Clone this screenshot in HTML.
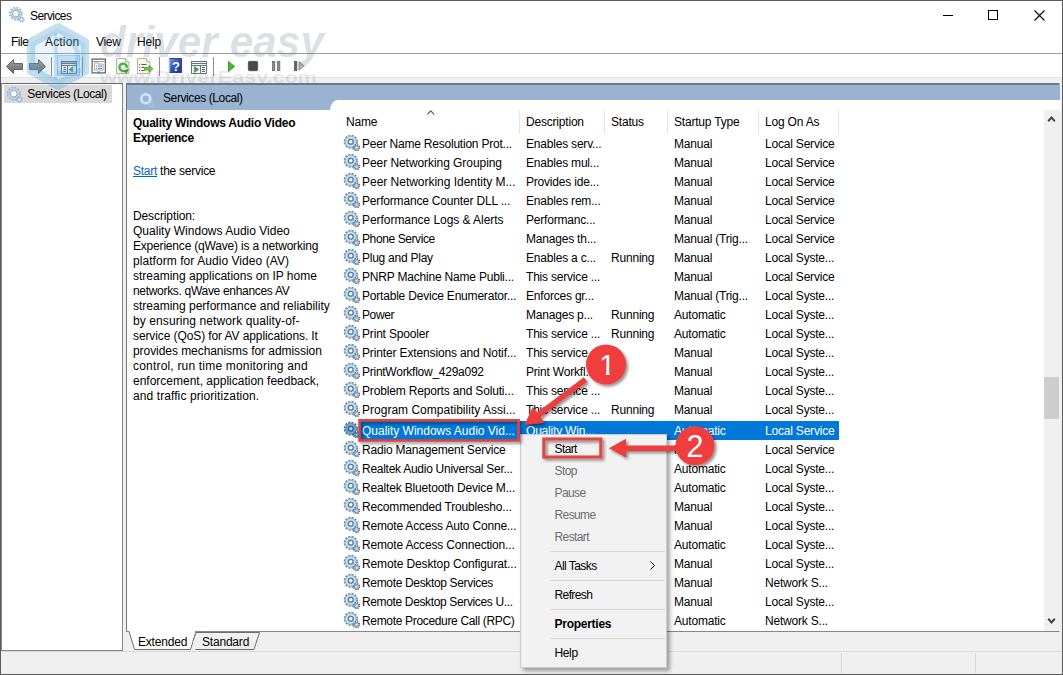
<!DOCTYPE html>
<html lang="en"><head><meta charset="utf-8"><title>Services</title>
<style>
*{box-sizing:border-box;margin:0;padding:0}
html,body{width:1063px;height:675px;overflow:hidden;background:#fff}
body{font-family:"Liberation Sans",sans-serif;font-size:12px;color:#000;position:relative}
.abs{position:absolute}
#win{position:absolute;left:0;top:0;width:1063px;height:675px;background:#fff;border:1px solid #5a5a5a;overflow:hidden}
.t{position:absolute;white-space:nowrap;line-height:14px;height:14px;letter-spacing:-.2px}
.g{position:absolute}
.row .t{top:2px}
.row{position:absolute;left:341px;width:498px;height:19px}
.sel{background:#0078d7;color:#fff}
</style></head><body>
<svg width="0" height="0" style="position:absolute"><defs>
<g id="gear">
<circle cx="7.800" cy="7.800" r="6.300" fill="none" stroke="#6f8da7" stroke-width="1.700" stroke-dasharray="2.050 1.2487"/>
<circle cx="7.800" cy="7.800" r="5.600" fill="url(#gg)" stroke="#86a5be" stroke-width=".7"/>
<circle cx="7.800" cy="7.800" r="2.400" fill="#fff" stroke="#5b7a94" stroke-width="1.300"/>
<circle cx="13.600" cy="13.700" r="2.900" fill="none" stroke="#566e84" stroke-width="1.600" stroke-dasharray="1.250 1.028"/>
<circle cx="13.600" cy="13.700" r="2.400" fill="#a3bacb" stroke="#6a859d" stroke-width=".6"/>
<circle cx="13.600" cy="13.700" r=".9" fill="#e4edf3"/>
</g>
<g id="gearL">
<circle cx="7.800" cy="7.700" r="6.100" fill="none" stroke="#8aa5ba" stroke-width="1.500" stroke-dasharray="1.700 1.494"/>
<circle cx="7.800" cy="7.700" r="4.600" fill="#fff" stroke="#b4d3ea" stroke-width="2"/>
<circle cx="7.800" cy="7.700" r="3.300" fill="none" stroke="#6f8fa9" stroke-width=".8"/>
<circle cx="13.400" cy="13.400" r="2.500" fill="none" stroke="#8da6bb" stroke-width="1.300" stroke-dasharray="1.050 .913"/>
<circle cx="13.400" cy="13.400" r="1.700" fill="#e6eef5" stroke="#9ab4c9" stroke-width=".7"/>
</g>
<g id="gearH">
<circle cx="7.800" cy="7.700" r="5.900" fill="none" stroke="#b9d2e6" stroke-width="1.300" stroke-dasharray="1.600 1.489"/>
<circle cx="7.800" cy="7.700" r="4.300" fill="none" stroke="#d6e8f5" stroke-width="2.200"/>
<circle cx="13.200" cy="13.200" r="2.300" fill="none" stroke="#bcd3e6" stroke-width="1.100" stroke-dasharray="1 .806"/>
</g>
<g id="gearS">
<circle cx="7.800" cy="7.700" r="6.300" fill="none" stroke="#3d6f9f" stroke-width="1.600" stroke-dasharray="2.050 1.2487"/>
<circle cx="7.800" cy="7.700" r="5.600" fill="#6ea3d2" stroke="#4a80b3" stroke-width=".7"/>
<circle cx="7.800" cy="7.700" r="2.400" fill="#b9d3ea" stroke="#2c5c8c" stroke-width="1.300"/>
<circle cx="13.600" cy="13.700" r="2.900" fill="none" stroke="#2d5986" stroke-width="1.600" stroke-dasharray="1.250 1.028"/>
<circle cx="13.600" cy="13.700" r="2.400" fill="#5a8fc0" stroke="#37699a" stroke-width=".6"/>
<circle cx="13.600" cy="13.700" r=".9" fill="#a9c8e3"/>
</g>
<radialGradient id="gg" cx=".5" cy=".5" r=".5"><stop offset=".45" stop-color="#9fc3dc"/><stop offset=".75" stop-color="#cfe6f5"/><stop offset="1" stop-color="#a5c6dc"/></radialGradient>
</defs></svg>
<div id="win">

<div class="abs" id="in" style="left:-1px;top:-1px;width:1063px;height:675px">
<svg class="g" style="left:8px;top:6px" width="17" height="17" viewBox="0 0 17 17"><use href="#gearL"/></svg>
<div class="t" style="left:30px;top:9px;letter-spacing:-0.59px">Services</div>
<div class="abs" style="left:943px;top:15px;width:10px;height:1px;background:#000"></div>
<div class="abs" style="left:988px;top:10px;width:10px;height:10px;border:1px solid #000"></div>
<svg class="g" style="left:1034px;top:10px" width="11" height="11" viewBox="0 0 11 11"><path d="M.5 .5l10 10M10.500 .5l-10 10" stroke="#000" stroke-width="1.100" fill="none"/></svg>
<div class="t" style="left:11px;top:35px;letter-spacing:-0.48px">File</div>
<div class="t" style="left:45px;top:35px;letter-spacing:0.17px">Action</div>
<div class="t" style="left:96px;top:35px;letter-spacing:-0.33px">View</div>
<div class="t" style="left:137px;top:35px;letter-spacing:-0.20px">Help</div>
<div class="abs" style="left:1px;top:53px;width:1061px;height:1px;background:#a0a0a0"></div>
<svg class="g" style="left:0;top:54px" width="320" height="24" viewBox="0 54 320 24">
<defs>
<linearGradient id="ag" x1="0" y1="0" x2="0" y2="1"><stop offset="0" stop-color="#a9a9a9"/><stop offset=".5" stop-color="#858585"/><stop offset="1" stop-color="#6c6c6c"/></linearGradient>
<linearGradient id="hg" x1="0" y1="0" x2="1" y2="1"><stop offset="0" stop-color="#7d97e0"/><stop offset=".5" stop-color="#2f50b5"/><stop offset="1" stop-color="#1d348c"/></linearGradient>
<linearGradient id="pg" x1="0" y1="0" x2="1" y2="1"><stop offset="0" stop-color="#fff"/><stop offset="1" stop-color="#e4e4dc"/></linearGradient>
</defs>
<path d="M6.500 66.500L13.500 59.500V63.500H22.500V69.500H13.500V73.500Z" fill="url(#ag)" stroke="#666" stroke-width="1" stroke-linejoin="round"/>
<path d="M45.500 66.500L38.500 59.500V63.500H29.500V69.500H38.500V73.500Z" fill="url(#ag)" stroke="#586464" stroke-width="1" stroke-linejoin="round"/>
<path d="M51.500 57v19M82.500 57v19M159.500 57v19M213.500 57v19" stroke="#8d8d8d" stroke-width="1"/>
<rect x="57.500" y="55.500" width="22" height="20" fill="#cce8ff" stroke="#99d1ff"/>
<!-- show/hide tree -->
<rect x="61.500" y="61.500" width="15" height="12" fill="#f4f7f9" stroke="#6a7480"/>
<path d="M62 63.300h14" stroke="#6a7480" stroke-width="1.600"/><path d="M61.500 65.500h15M67.500 65.500v8" stroke="#6a7480"/>
<path d="M63.500 67.500h2.500M63.500 69.500h2.500M63.500 71.500h2.500" stroke="#5c6670"/>
<path d="M72.700 67v5l-3.600-2.500z" fill="#3fa53a" stroke="#2e8a2c" stroke-width=".5"/>
<!-- properties -->
<rect x="92.100" y="59.100" width="13.300" height="13.800" fill="#fbfbfb" stroke="#6a6a6a" stroke-width="1.300"/>
<path d="M93 61.500h12" stroke="#8a8a8a" stroke-width=".8"/>
<path d="M94.500 62.800h3.500v1.200h5.200v6h-8.700z" fill="#f3f6f9" stroke="#94a0ac" stroke-width=".8"/>
<path d="M96 66h1M98 66h4M96 68.300h1M98 68.300h4" stroke="#6b7683" stroke-width=".9"/>
<rect x="97" y="71.600" width="3.200" height="1.900" fill="#3c97dc"/>
<!-- refresh -->
<path d="M116.500 58.500h9l3.500 3.500v11.500h-12.500z" fill="url(#pg)" stroke="#a9a9a0" stroke-width=".9"/>
<path d="M125.500 58.500v3.500h3.500" fill="#ecece6" stroke="#a9a9a0" stroke-width=".8"/>
<g transform="rotate(28 123.200 67)"><path d="M125.500 70.300a3.700 3.700 0 1 1 1.300-4.300" fill="none" stroke="#4aae38" stroke-width="2.400"/>
<path d="M129.200 65.700v5.300h-5.300z" fill="#3c9a2e"/></g>
<!-- export list -->
<path d="M137.500 58.500h9l3.500 3.500v11.500h-12.500z" fill="#f7f6e8" stroke="#a9a9a0" stroke-width=".9"/>
<path d="M146.500 58.500v3.500h3.500" fill="#ecece6" stroke="#a9a9a0" stroke-width=".8"/>
<path d="M139 64.500h1M141.500 64.500h5M139 67.500h1M141.500 67.500h3M139 70.500h1M141.500 70.500h3" stroke="#5a5a50" stroke-width="1.100"/>
<path d="M144.500 67.500h4.500v-2.300l4 3.600-4 3.600V70h-4.500z" fill="#6cc84a" stroke="#3d9a2e" stroke-width=".7"/>
<!-- help -->
<rect x="169.500" y="58.500" width="12" height="14" fill="url(#hg)" stroke="#23388a" stroke-width=".9"/>
<path d="M169.500 58.500v14" stroke="#9db2ea" stroke-width="1.400"/>
<text x="176" y="70.500" font-family="Liberation Sans,sans-serif" font-weight="bold" font-size="13" fill="#fff" text-anchor="middle">?</text>
<!-- action pane -->
<rect x="191.500" y="61.500" width="15" height="12" fill="#f4f7f9" stroke="#6a7480"/>
<path d="M192 63.500h14" stroke="#6a7480"/><path d="M191.500 65.500h15M200.500 65.500v8" stroke="#6a7480"/>
<path d="M202 67.500h3M202 69.500h3M202 71.500h3" stroke="#5c6670"/>
<path d="M194.500 66.500v6l4-3z" fill="#3fa53a" stroke="#2e8a2c" stroke-width=".6"/>
<!-- play/stop/pause/resume -->
<path d="M228.500 61.500v10l6-5z" fill="#46b82f" stroke="#2f9a20" stroke-width=".9" stroke-linejoin="round"/>
<rect x="248.300" y="61.300" width="9.400" height="9.400" rx="1.300" fill="#494949" stroke="#3a3a3a" stroke-width=".6"/>
<rect x="272.300" y="61.300" width="2.600" height="9.400" fill="#8a8a8a" stroke="#606060" stroke-width=".6"/>
<rect x="277.300" y="61.300" width="2.600" height="9.400" fill="#8a8a8a" stroke="#606060" stroke-width=".6"/>
<rect x="294.300" y="61.300" width="2.600" height="9.400" fill="#666" stroke="#4c4c4c" stroke-width=".6"/>
<path d="M299 61.800v8.400l5.300-4.200z" fill="#b9b9b9" stroke="#7a7a7a" stroke-width=".8" stroke-linejoin="round"/>
</svg>
<div class="abs" style="left:1px;top:77px;width:1061px;height:5px;background:#f0f0f0;border-top:1px solid #e3e3e3"></div>
<div class="abs" style="left:1px;top:82px;width:1061px;height:592px;background:#f0f0f0"></div>
<div class="abs" style="left:1px;top:83px;width:122px;height:568px;background:#fff;border:1px solid #828790;border-top-color:#696969"></div>
<div class="abs" style="left:4px;top:85px;width:108px;height:17.500px;background:#d9d9d9"></div>
<svg class="g" style="left:6px;top:86px" width="17" height="17" viewBox="0 0 17 17"><use href="#gearL"/></svg>
<div class="t" style="left:27.3px;top:87px;letter-spacing:-0.40px">Services (Local)</div>
<div class="abs" style="left:126px;top:83px;width:934px;height:549px;background:#fff;border:1px solid #828790;border-top:2px solid #69788a;border-right-color:#fafafa;border-left-color:#6e7780"></div>
<div class="abs" style="left:127px;top:85px;width:933px;height:24.600px;background:#99b4d1"></div>
<div class="abs" style="left:329.500px;top:100px;width:731px;height:10px;background:#fff;border-top-left-radius:8px 10px"></div>
<svg class="g" style="left:138px;top:91px" width="17" height="17" viewBox="0 0 17 17"><use href="#gearH"/></svg>
<div class="t" style="left:163px;top:91px;letter-spacing:-0.40px">Services (Local)</div>
<div class="t" style="left:133px;top:116px;font-weight:bold;letter-spacing:-0.26px">Quality Windows Audio Video</div>
<div class="t" style="left:133px;top:131px;font-weight:bold;letter-spacing:-0.33px">Experience</div>
<div class="t" style="left:133px;top:164px;letter-spacing:-0.26px"><span style="color:#0066cc;text-decoration:underline">Start</span> the service</div>
<div class="t" style="left:133px;top:209px;letter-spacing:-0.11px">Description:</div>
<div class="t" style="left:133px;top:224px;letter-spacing:0.01px">Quality Windows Audio Video</div>
<div class="t" style="left:133px;top:239px;letter-spacing:-0.19px">Experience (qWave) is a networking</div>
<div class="t" style="left:133px;top:254px;letter-spacing:0.06px">platform for Audio Video (AV)</div>
<div class="t" style="left:133px;top:269px;letter-spacing:-0.00px">streaming applications on IP home</div>
<div class="t" style="left:133px;top:284px;letter-spacing:-0.31px">networks. qWave enhances AV</div>
<div class="t" style="left:133px;top:299px;letter-spacing:0.00px">streaming performance and reliability</div>
<div class="t" style="left:133px;top:314px;letter-spacing:0.10px">by ensuring network quality-of-</div>
<div class="t" style="left:133px;top:329px;letter-spacing:-0.10px">service (QoS) for AV applications. It</div>
<div class="t" style="left:133px;top:344px;letter-spacing:-0.06px">provides mechanisms for admission</div>
<div class="t" style="left:133px;top:359px;letter-spacing:0.19px">control, run time monitoring and</div>
<div class="t" style="left:133px;top:374px;letter-spacing:-0.00px">enforcement, application feedback,</div>
<div class="t" style="left:133px;top:389px;letter-spacing:0.09px">and traffic prioritization.</div>
<div class="t" style="left:346px;top:115px">Name</div>
<div class="t" style="left:526px;top:115px">Description</div>
<div class="t" style="left:611px;top:115px">Status</div>
<div class="t" style="left:674px;top:115px">Startup Type</div>
<div class="t" style="left:765px;top:115px">Log On As</div>
<div class="abs" style="left:519px;top:110px;width:1px;height:24px;background:#e5e5e5"></div>
<div class="abs" style="left:604px;top:110px;width:1px;height:24px;background:#e5e5e5"></div>
<div class="abs" style="left:667px;top:110px;width:1px;height:24px;background:#e5e5e5"></div>
<div class="abs" style="left:758px;top:110px;width:1px;height:24px;background:#e5e5e5"></div>
<div class="abs" style="left:838px;top:110px;width:1px;height:24px;background:#e5e5e5"></div>
<svg class="g" style="left:427px;top:110px" width="8" height="5" viewBox="0 0 8 5"><path d="M.4 4.300L3.800 .9L7.200 4.300" stroke="#555" stroke-width="1.100" fill="none"/></svg>
<svg class="g" style="left:343px;top:134px" width="17" height="17" viewBox="0 0 17 17"><use href="#gear"/></svg>
<div class="t" style="left:362px;top:137px;letter-spacing:-0.22px">Peer Name Resolution Prot...</div>
<div class="t" style="left:526px;top:137px;">Enables serv...</div>
<div class="t" style="left:674px;top:137px;">Manual</div>
<div class="t" style="left:765px;top:137px;">Local Service</div>
<svg class="g" style="left:343px;top:153px" width="17" height="17" viewBox="0 0 17 17"><use href="#gear"/></svg>
<div class="t" style="left:362px;top:156px;letter-spacing:-0.06px">Peer Networking Grouping</div>
<div class="t" style="left:526px;top:156px;">Enables mul...</div>
<div class="t" style="left:674px;top:156px;">Manual</div>
<div class="t" style="left:765px;top:156px;">Local Service</div>
<svg class="g" style="left:343px;top:172px" width="17" height="17" viewBox="0 0 17 17"><use href="#gear"/></svg>
<div class="t" style="left:362px;top:175px;letter-spacing:-0.02px">Peer Networking Identity M...</div>
<div class="t" style="left:526px;top:175px;">Provides ide...</div>
<div class="t" style="left:674px;top:175px;">Manual</div>
<div class="t" style="left:765px;top:175px;">Local Service</div>
<svg class="g" style="left:343px;top:191px" width="17" height="17" viewBox="0 0 17 17"><use href="#gear"/></svg>
<div class="t" style="left:362px;top:194px;letter-spacing:-0.18px">Performance Counter DLL ...</div>
<div class="t" style="left:526px;top:194px;">Enables rem...</div>
<div class="t" style="left:674px;top:194px;">Manual</div>
<div class="t" style="left:765px;top:194px;">Local Service</div>
<svg class="g" style="left:343px;top:210px" width="17" height="17" viewBox="0 0 17 17"><use href="#gear"/></svg>
<div class="t" style="left:362px;top:213px;letter-spacing:-0.05px">Performance Logs &amp; Alerts</div>
<div class="t" style="left:526px;top:213px;">Performanc...</div>
<div class="t" style="left:674px;top:213px;">Manual</div>
<div class="t" style="left:765px;top:213px;">Local Service</div>
<svg class="g" style="left:343px;top:229px" width="17" height="17" viewBox="0 0 17 17"><use href="#gear"/></svg>
<div class="t" style="left:362px;top:232px;letter-spacing:-0.40px">Phone Service</div>
<div class="t" style="left:526px;top:232px;">Manages th...</div>
<div class="t" style="left:674px;top:232px;">Manual (Trig...</div>
<div class="t" style="left:765px;top:232px;">Local Service</div>
<svg class="g" style="left:343px;top:248px" width="17" height="17" viewBox="0 0 17 17"><use href="#gear"/></svg>
<div class="t" style="left:362px;top:251px;letter-spacing:-0.25px">Plug and Play</div>
<div class="t" style="left:526px;top:251px;">Enables a c...</div>
<div class="t" style="left:611px;top:251px;">Running</div>
<div class="t" style="left:674px;top:251px;">Manual</div>
<div class="t" style="left:765px;top:251px;">Local Syste...</div>
<svg class="g" style="left:343px;top:267px" width="17" height="17" viewBox="0 0 17 17"><use href="#gear"/></svg>
<div class="t" style="left:362px;top:270px;letter-spacing:-0.20px">PNRP Machine Name Publi...</div>
<div class="t" style="left:526px;top:270px;">This service ...</div>
<div class="t" style="left:674px;top:270px;">Manual</div>
<div class="t" style="left:765px;top:270px;">Local Service</div>
<svg class="g" style="left:343px;top:286px" width="17" height="17" viewBox="0 0 17 17"><use href="#gear"/></svg>
<div class="t" style="left:362px;top:289px;letter-spacing:-0.20px">Portable Device Enumerator...</div>
<div class="t" style="left:526px;top:289px;">Enforces gr...</div>
<div class="t" style="left:674px;top:289px;">Manual (Trig...</div>
<div class="t" style="left:765px;top:289px;">Local Syste...</div>
<svg class="g" style="left:343px;top:305px" width="17" height="17" viewBox="0 0 17 17"><use href="#gear"/></svg>
<div class="t" style="left:362px;top:308px;letter-spacing:-0.40px">Power</div>
<div class="t" style="left:526px;top:308px;">Manages p...</div>
<div class="t" style="left:611px;top:308px;">Running</div>
<div class="t" style="left:674px;top:308px;">Automatic</div>
<div class="t" style="left:765px;top:308px;">Local Syste...</div>
<svg class="g" style="left:343px;top:324px" width="17" height="17" viewBox="0 0 17 17"><use href="#gear"/></svg>
<div class="t" style="left:362px;top:327px;letter-spacing:-0.18px">Print Spooler</div>
<div class="t" style="left:526px;top:327px;">This service ...</div>
<div class="t" style="left:611px;top:327px;">Running</div>
<div class="t" style="left:674px;top:327px;">Automatic</div>
<div class="t" style="left:765px;top:327px;">Local Syste...</div>
<svg class="g" style="left:343px;top:343px" width="17" height="17" viewBox="0 0 17 17"><use href="#gear"/></svg>
<div class="t" style="left:362px;top:346px;letter-spacing:-0.14px">Printer Extensions and Notif...</div>
<div class="t" style="left:526px;top:346px;">This service ...</div>
<div class="t" style="left:674px;top:346px;">Manual</div>
<div class="t" style="left:765px;top:346px;">Local Syste...</div>
<svg class="g" style="left:343px;top:362px" width="17" height="17" viewBox="0 0 17 17"><use href="#gear"/></svg>
<div class="t" style="left:362px;top:365px;letter-spacing:-0.26px">PrintWorkflow_429a092</div>
<div class="t" style="left:526px;top:365px;">Print Workfl...</div>
<div class="t" style="left:674px;top:365px;">Manual</div>
<div class="t" style="left:765px;top:365px;">Local Syste...</div>
<svg class="g" style="left:343px;top:381px" width="17" height="17" viewBox="0 0 17 17"><use href="#gear"/></svg>
<div class="t" style="left:362px;top:384px;letter-spacing:-0.17px">Problem Reports and Soluti...</div>
<div class="t" style="left:526px;top:384px;">This service ...</div>
<div class="t" style="left:674px;top:384px;">Manual</div>
<div class="t" style="left:765px;top:384px;">Local Syste...</div>
<svg class="g" style="left:343px;top:400px" width="17" height="17" viewBox="0 0 17 17"><use href="#gear"/></svg>
<div class="t" style="left:362px;top:403px;letter-spacing:0.01px">Program Compatibility Assi...</div>
<div class="t" style="left:526px;top:403px;">This service ...</div>
<div class="t" style="left:611px;top:403px;">Running</div>
<div class="t" style="left:674px;top:403px;">Manual</div>
<div class="t" style="left:765px;top:403px;">Local Syste...</div>
<svg class="g" style="left:343px;top:421px" width="17" height="17" viewBox="0 0 17 17"><use href="#gearS"/></svg>
<div class="abs" style="left:360px;top:421px;width:479px;height:18.500px;background:#0078d7"></div>
<div class="t" style="left:362px;top:424px;color:#fff;letter-spacing:-0.01px">Quality Windows Audio Vid...</div>
<div class="t" style="left:526px;top:424px;color:#fff;">Quality Win...</div>
<div class="t" style="left:674px;top:424px;color:#fff;">Automatic</div>
<div class="t" style="left:765px;top:424px;color:#fff;">Local Service</div>
<svg class="g" style="left:343px;top:440px" width="17" height="17" viewBox="0 0 17 17"><use href="#gear"/></svg>
<div class="t" style="left:362px;top:443px;letter-spacing:-0.19px">Radio Management Service</div>
<div class="t" style="left:674px;top:443px;">Manual</div>
<div class="t" style="left:765px;top:443px;">Local Service</div>
<svg class="g" style="left:343px;top:459px" width="17" height="17" viewBox="0 0 17 17"><use href="#gear"/></svg>
<div class="t" style="left:362px;top:462px;letter-spacing:-0.27px">Realtek Audio Universal Ser...</div>
<div class="t" style="left:674px;top:462px;">Automatic</div>
<div class="t" style="left:765px;top:462px;">Local Syste...</div>
<svg class="g" style="left:343px;top:478px" width="17" height="17" viewBox="0 0 17 17"><use href="#gear"/></svg>
<div class="t" style="left:362px;top:481px;letter-spacing:-0.17px">Realtek Bluetooth Device M...</div>
<div class="t" style="left:674px;top:481px;">Automatic</div>
<div class="t" style="left:765px;top:481px;">Local Syste...</div>
<svg class="g" style="left:343px;top:497px" width="17" height="17" viewBox="0 0 17 17"><use href="#gear"/></svg>
<div class="t" style="left:362px;top:500px;letter-spacing:-0.17px">Recommended Troublesho...</div>
<div class="t" style="left:674px;top:500px;">Manual</div>
<div class="t" style="left:765px;top:500px;">Local Syste...</div>
<svg class="g" style="left:343px;top:516px" width="17" height="17" viewBox="0 0 17 17"><use href="#gear"/></svg>
<div class="t" style="left:362px;top:519px;letter-spacing:-0.19px">Remote Access Auto Conne...</div>
<div class="t" style="left:674px;top:519px;">Manual</div>
<div class="t" style="left:765px;top:519px;">Local Syste...</div>
<svg class="g" style="left:343px;top:535px" width="17" height="17" viewBox="0 0 17 17"><use href="#gear"/></svg>
<div class="t" style="left:362px;top:538px;letter-spacing:-0.18px">Remote Access Connection...</div>
<div class="t" style="left:674px;top:538px;">Automatic</div>
<div class="t" style="left:765px;top:538px;">Local Syste...</div>
<svg class="g" style="left:343px;top:554px" width="17" height="17" viewBox="0 0 17 17"><use href="#gear"/></svg>
<div class="t" style="left:362px;top:557px;letter-spacing:-0.12px">Remote Desktop Configurat...</div>
<div class="t" style="left:674px;top:557px;">Manual</div>
<div class="t" style="left:765px;top:557px;">Local Syste...</div>
<svg class="g" style="left:343px;top:573px" width="17" height="17" viewBox="0 0 17 17"><use href="#gear"/></svg>
<div class="t" style="left:362px;top:576px;letter-spacing:-0.34px">Remote Desktop Services</div>
<div class="t" style="left:674px;top:576px;">Manual</div>
<div class="t" style="left:765px;top:576px;">Network S...</div>
<svg class="g" style="left:343px;top:592px" width="17" height="17" viewBox="0 0 17 17"><use href="#gear"/></svg>
<div class="t" style="left:362px;top:595px;letter-spacing:-0.36px">Remote Desktop Services U...</div>
<div class="t" style="left:674px;top:595px;">Manual</div>
<div class="t" style="left:765px;top:595px;">Local Syste...</div>
<svg class="g" style="left:343px;top:611px" width="17" height="17" viewBox="0 0 17 17"><use href="#gear"/></svg>
<div class="t" style="left:362px;top:614px;letter-spacing:-0.33px">Remote Procedure Call (RPC)</div>
<div class="t" style="left:674px;top:614px;">Automatic</div>
<div class="t" style="left:765px;top:614px;">Network S...</div>
<div class="abs" style="left:1044px;top:110px;width:16px;height:521px;background:#f0f0f0"></div>
<div class="abs" style="left:1044px;top:377px;width:15px;height:41.500px;background:#cdcdcd"></div>
<svg class="g" style="left:1047px;top:115px" width="9" height="8" viewBox="0 0 9 8"><path d="M1.200 6.200L4.500 2.600L7.800 6.200" stroke="#454545" stroke-width="2" fill="none"/></svg>
<svg class="g" style="left:1047px;top:617px" width="9" height="8" viewBox="0 0 9 8"><path d="M1.200 1.800L4.500 5.400L7.800 1.800" stroke="#454545" stroke-width="2" fill="none"/></svg>
<svg class="g" style="left:126px;top:631px" width="150" height="21" viewBox="0 0 150 21">
<path d="M0 .5h150" stroke="#828790"/>
<path d="M3 0.500L8.500 18.500H64.500L70 1" fill="#fff" stroke="#6d6d6d"/>
<path d="M67 10L70 1.500H133.500L128 18.500H69.500" fill="#f0f0f0" stroke="#6d6d6d"/>
<path d="M3.500 0.500H69" stroke="#fff"/>
</svg>
<div class="t" style="left:138px;top:635px">Extended</div>
<div class="t" style="left:202px;top:635px">Standard</div>
<div class="abs" style="left:1px;top:651px;width:1061px;height:1px;background:#d9d9d9"></div>
<div class="abs" style="left:841px;top:653px;width:1px;height:20px;background:#d7d7d7"></div>
<div class="abs" style="left:975px;top:653px;width:1px;height:20px;background:#d7d7d7"></div>
<div class="abs" id="cm" style="left:520px;top:434px;width:147px;height:234px;background:#f2f2f2;border:1px solid #cccccc;box-shadow:3px 3px 4px rgba(0,0,0,.35)"></div>
<div class="t" style="left:554.5px;top:442px;color:#000;letter-spacing:-0.60px">Start</div>
<div class="t" style="left:554.5px;top:464px;color:#6d6d6d;letter-spacing:-0.60px">Stop</div>
<div class="t" style="left:554.5px;top:486px;color:#6d6d6d;letter-spacing:-0.60px">Pause</div>
<div class="t" style="left:554.5px;top:508px;color:#6d6d6d;letter-spacing:-0.60px">Resume</div>
<div class="t" style="left:554.5px;top:530px;color:#6d6d6d;letter-spacing:-0.60px">Restart</div>
<div class="t" style="left:554.5px;top:559px;color:#000;letter-spacing:-0.56px">All Tasks</div>
<div class="t" style="left:554.5px;top:588px;color:#000;letter-spacing:-0.60px">Refresh</div>
<div class="t" style="left:554.5px;top:617px;font-weight:bold;color:#000;letter-spacing:-0.26px">Properties</div>
<div class="t" style="left:554.5px;top:646px;color:#000;letter-spacing:-0.36px">Help</div>
<div class="abs" style="left:550px;top:551px;width:115px;height:1px;background:#d7d7d7"></div>
<div class="abs" style="left:550px;top:580px;width:115px;height:1px;background:#d7d7d7"></div>
<div class="abs" style="left:550px;top:609px;width:115px;height:1px;background:#d7d7d7"></div>
<div class="abs" style="left:550px;top:638px;width:115px;height:1px;background:#d7d7d7"></div>
<svg class="g" style="left:650px;top:561px" width="5" height="9" viewBox="0 0 5 9"><path d="M.5 .5l4 4-4 4" stroke="#000" fill="none"/></svg>
<svg class="g" style="left:340px;top:330px;pointer-events:none" width="400" height="150" viewBox="340 330 400 150">
<defs><filter id="sh" x="-20%" y="-20%" width="150%" height="150%"><feGaussianBlur in="SourceAlpha" stdDeviation="1.600"/><feOffset dx="1.500" dy="2"/><feComponentTransfer><feFuncA type="linear" slope=".45"/></feComponentTransfer><feMerge><feMergeNode/><feMergeNode in="SourceGraphic"/></feMerge></filter></defs>
<g filter="url(#sh)">
<rect x="359.500" y="420.300" width="159" height="20.200" fill="none" stroke="#e5403e" stroke-width="2.600"/>
<rect x="543.800" y="439" width="57" height="18" fill="none" stroke="#e4443f" stroke-width="3.100"/>
<path d="M585.500 379.500L538 415.300" stroke="#ee3d3c" stroke-width="5.600" fill="none"/>
<path d="M524.500 424.800L532.800 406.800L544.600 422.800Z" fill="#ee3d3c"/>
<path d="M677 448.200H624" stroke="#ee3d3c" stroke-width="5.600" fill="none"/>
<path d="M608.800 448.200L626 438.800V457.600Z" fill="#ee3d3c"/>
<circle cx="606" cy="364.500" r="20" fill="#f03d3c"/>
<circle cx="695" cy="445.700" r="19.500" fill="#f03d3c"/>
</g>
<text id="d1" x="607.400" y="374.600" font-family="Liberation Sans,sans-serif" font-size="29" fill="#fff" text-anchor="middle">1</text>
<rect x="600.500" y="371.600" width="5.400" height="4" fill="#f03d3c"/><rect x="609.500" y="371.600" width="5" height="4" fill="#f03d3c"/>
<text id="d2" x="695" y="456.600" font-family="Liberation Sans,sans-serif" font-size="30.500" fill="#fff" text-anchor="middle">2</text>
</svg>
<svg class="g" style="left:0;top:0;pointer-events:none" width="340" height="110" viewBox="0 0 340 110">
<defs><filter id="wb" x="-5%" y="-20%" width="110%" height="140%"><feGaussianBlur stdDeviation=".7"/></filter></defs>
<g filter="url(#wb)">
<path d="M58 28L85.500 43V70L58 85L30.500 70V43Z" fill="#5aa5d6" fill-opacity=".13" stroke="#5aa5d6" stroke-opacity=".36" stroke-width="9.500" stroke-linejoin="round"/>
<path d="M55.800 33V80" stroke="#5aa5d6" stroke-opacity=".3" stroke-width="3" fill="none"/>
<path d="M57 40h5a16 16.500 0 0 1 0 33h-5" stroke="#5aa5d6" stroke-opacity=".3" stroke-width="5" fill="none"/>
</g>
<text x="100" y="56.500" filter="url(#wb)" font-family="Liberation Sans,sans-serif" font-style="italic" font-weight="bold" font-size="44" fill="#5f7286" fill-opacity=".22" textLength="224" lengthAdjust="spacingAndGlyphs">driver easy</text>
<text x="100" y="82.800" filter="url(#wb)" font-family="Liberation Sans,sans-serif" font-weight="bold" font-size="17" fill="#5f7286" fill-opacity=".16" textLength="217" lengthAdjust="spacingAndGlyphs">www.DriverEasy.com</text>
</svg>
</div></div></body></html>
